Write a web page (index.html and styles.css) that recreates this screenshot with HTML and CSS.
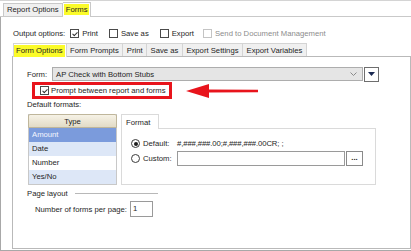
FILE: index.html
```html
<!DOCTYPE html>
<html lang="en">
<head>
    <meta charset="UTF-8">
    <title>Report Options - Forms</title>
    <link rel="stylesheet" href="styles.css">
</head>
<body>
    <div class="dialog">
        <div class="top-tabs">
            <div class="tab">Report Options</div>
            <div class="tab active"><span class="hl">Forms</span></div>
        </div>

        <div class="panel">
            <div class="output-row">
                <span>Output options:</span>
                <label class="chk first"><span class="box checked"></span>Print</label>
                <label class="chk"><span class="box"></span>Save as</label>
                <label class="chk"><span class="box"></span>Export</label>
                <label class="chk disabled"><span class="box"></span>Send to Document Management</label>
            </div>

            <div class="sub-tabs">
                <div class="stab active"><span class="hl">Form Options</span></div>
                <div class="stab">Form Prompts</div>
                <div class="stab">Print</div>
                <div class="stab">Save as</div>
                <div class="stab">Export Settings</div>
                <div class="stab">Export Variables</div>
            </div>

            <div class="sub-panel">
                <div class="form-row">
                    <span class="form-label">Form:</span>
                    <div class="combo">
                        <span>AP Check with Bottom Stubs</span>
                        <svg class="chevron" width="7" height="4" viewBox="0 0 7 4"><polyline points="0.5,0.5 3.5,3.5 6.5,0.5" fill="none" stroke="#8a8a8a" stroke-width="1"/></svg>
                    </div>
                    <div class="drop-btn">
                        <svg width="7" height="4" viewBox="0 0 7 4"><polygon points="0,0 7,0 3.5,4" fill="#1b2a52"/></svg>
                    </div>
                </div>

                <div class="annot-row">
                    <label class="chk prompt"><span class="box checked"></span>Prompt between report and forms</label>
                    <svg class="arrow" width="78" height="16" viewBox="0 0 78 16">
                        <polygon points="0,8 23,1 23,15" fill="#e8141c"/>
                        <polygon points="22,6.5 72,6.8 72,9.2 22,9.5" fill="#e8141c"/>
                    </svg>
                </div>

                <div class="section-label">Default formats:</div>

                <div class="formats">
                    <div class="type-list">
                        <div class="type-head">Type</div>
                        <div class="type-row selected">Amount</div>
                        <div class="type-row alt">Date</div>
                        <div class="type-row">Number</div>
                        <div class="type-row alt">Yes/No</div>
                    </div>

                    <div class="format-group">
                        <div class="fg-tab">Format</div>
                        <div class="fg-body">
                            <div class="radio-row">
                                <span class="radio on"></span>
                                <span class="radio-label">Default:</span>
                                <span class="format-value">#,###,###.00;#,###,###.00CR; ;</span>
                            </div>
                            <div class="radio-row">
                                <span class="radio"></span>
                                <span class="radio-label">Custom:</span>
                                <div class="text-input custom"></div>
                                <div class="dots-btn">...</div>
                            </div>
                        </div>
                    </div>
                </div>

                <div class="group-title">
                    <span>Page layout</span>
                    <span class="group-line"></span>
                </div>
                <div class="per-page">
                    <span>Number of forms per page:</span>
                    <div class="text-input small">1</div>
                </div>
            </div>
        </div>
    </div>
</body>
</html>
```

FILE: styles.css
```css
/* General */
body {
    margin: 0;
    font-family: 'Liberation Sans', Arial, sans-serif;
    font-size: 7.7px;
    color: #1e1e1e;
    background-color: #ffffff;
    width: 411px;
    height: 251px;
    overflow: hidden;
    white-space: nowrap;
}

.dialog {
    height: 251px;
    display: flex;
    flex-direction: column;
    box-sizing: border-box;
    border-top: 1px solid #d4d4d4;
}

/* Top tab strip */
.top-tabs {
    height: 16px;
    display: flex;
    align-items: flex-end;
    padding-left: 3px;
    border-bottom: 1px solid #c9c9c9;
    box-sizing: border-box;
}

.tab {
    height: 12px;
    line-height: 12px;
    padding: 0 3px;
    border: 1px solid #c9c9c9;
    border-bottom: none;
    background-color: #f0f0f0;
}

.tab.active {
    height: 14px;
    line-height: 13px;
    padding: 0 1px;
    margin-bottom: -1px;
    background-color: #ffffff;
    border-left: none;
}

.hl {
    background-color: #fbfb2a;
    padding: 1px 2px;
}

/* Main panel */
.panel {
    flex: 1;
    display: flex;
    flex-direction: column;
    border-left: 1px solid #a8a8a8;
    border-bottom: 1px solid #a8a8a8;
    padding: 10px 0 1px 11px;
}

.output-row {
    height: 12px;
    display: flex;
    align-items: center;
    padding-left: 1px;
}

.chk {
    display: flex;
    align-items: center;
    gap: 3px;
    margin-left: 11px;
}

.chk.first {
    margin-left: 5px;
}

.chk.disabled {
    color: #8c8c8c;
    margin-left: 9px;
}

.box {
    width: 9px;
    height: 9px;
    flex: none;
    box-sizing: border-box;
    border: 1px solid #4a4a4a;
    background-color: #ffffff;
    position: relative;
}

.chk.disabled .box {
    border-color: #c4c4c4;
}

.box.checked::after {
    content: "";
    position: absolute;
    left: 1px;
    top: 0;
    width: 4px;
    height: 2px;
    border-left: 1px solid #333;
    border-bottom: 1px solid #333;
    transform: translate(0.5px, 2px) rotate(-45deg);
}

/* Sub tabs */
.sub-tabs {
    display: flex;
    margin-top: 4px;
    padding-left: 1px;
    height: 13px;
    position: relative;
    z-index: 1;
}

.stab {
    height: 13px;
    line-height: 13px;
    padding: 0 3.5px;
    border: 1px solid #d4d4d4;
    border-bottom: none;
    border-left: none;
    background-color: #f0f0f0;
    box-sizing: border-box;
}

.stab.active {
    height: 14px;
    background-color: #ffffff;
    border-left: 1px solid #d4d4d4;
    padding: 0 1px 0 0;
}

.stab.active .hl {
    display: inline-block;
    height: 12px;
    line-height: 12px;
    padding: 0 2px;
    margin-top: 1px;
}

.sub-panel {
    flex: 1;
    border: 1px solid #b9b9b9;
    padding: 10px 0 0 14px;
}

/* Form row */
.form-row {
    display: flex;
    align-items: center;
    height: 14px;
}

.form-label {
    width: 25px;
}

.combo {
    width: 311px;
    height: 14px;
    box-sizing: border-box;
    border: 1px solid #adadad;
    background-color: #e5e5e5;
    display: flex;
    align-items: center;
    justify-content: space-between;
    padding: 0 5px 0 3px;
}

.drop-btn {
    width: 15px;
    height: 15px;
    box-sizing: border-box;
    margin-left: 1px;
    border: 1px solid #6e6e6e;
    background-color: #ffffff;
    display: flex;
    align-items: center;
    justify-content: center;
}

/* Annotation */
.annot-row {
    display: flex;
    align-items: center;
    margin-top: 1px;
}

.chk.prompt {
    margin-left: 5px;
    height: 17px;
    width: 140px;
    box-sizing: border-box;
    border: 3px solid #e8141c;
    padding-left: 5px;
    gap: 2px;
}

.arrow {
    margin-left: 14px;
}

.section-label {
    margin-top: 1px;
    height: 10px;
    line-height: 10px;
}

/* Formats */
.formats {
    display: flex;
    align-items: flex-start;
    margin-top: 4px;
    margin-left: 1px;
}

.type-list {
    width: 87px;
    border: 1px solid #c8c8c8;
    border-top: none;
}

.type-head {
    height: 14px;
    line-height: 14px;
    text-align: center;
    background: linear-gradient(#f6f2e6, #e2dbc6);
    border: 1px solid #bfb69b;
    border-radius: 2px 2px 0 0;
    margin: 0 -1px;
    box-sizing: border-box;
}

.type-row {
    height: 14px;
    line-height: 14px;
    padding-left: 3px;
}

.type-row.alt {
    background-color: #dde7f7;
}

.type-row.selected {
    background-color: #7b9bdc;
    color: #f4f6ff;
}

.format-group {
    margin-left: 4px;
    display: flex;
    flex-direction: column;
    align-items: flex-start;
}

.fg-tab {
    height: 15px;
    line-height: 15px;
    padding: 0 8px 0 4px;
    border: 1px solid #dadada;
    border-bottom: none;
    background-color: #ffffff;
    margin-bottom: -1px;
    position: relative;
    box-sizing: border-box;
}

.fg-body {
    width: 255px;
    height: 57px;
    box-sizing: border-box;
    border: 1px solid #dadada;
    padding: 7px 0 0 9px;
}

.radio-row {
    display: flex;
    align-items: center;
    height: 15px;
}

.radio {
    width: 9px;
    height: 9px;
    box-sizing: border-box;
    border: 1px solid #3c3c3c;
    border-radius: 50%;
    position: relative;
}

.radio.on::after {
    content: "";
    position: absolute;
    left: 1.5px;
    top: 1.5px;
    width: 4px;
    height: 4px;
    border-radius: 50%;
    background-color: #1e1e1e;
}

.radio-label {
    width: 34px;
    margin-left: 3px;
}

.format-value {
    letter-spacing: -0.1px;
}

.text-input {
    height: 15px;
    box-sizing: border-box;
    border: 1px solid #9a9a9a;
    background-color: #ffffff;
}

.text-input.custom {
    width: 168px;
}

.dots-btn {
    width: 17px;
    height: 15px;
    box-sizing: border-box;
    margin-left: 1px;
    border: 1px solid #8a8a8a;
    text-align: center;
    line-height: 11px;
    font-weight: bold;
}

/* Page layout */
.group-title {
    display: flex;
    align-items: center;
    height: 10px;
    margin-top: 3px;
}

.group-line {
    width: 83px;
    height: 1px;
    margin-left: 7px;
    background-color: #b8b8b8;
}

.per-page {
    display: flex;
    align-items: center;
    margin-top: 3px;
    padding-left: 8px;
    gap: 3px;
}

.text-input.small {
    width: 23px;
    height: 16px;
    line-height: 14px;
    padding-left: 2px;
}
```
